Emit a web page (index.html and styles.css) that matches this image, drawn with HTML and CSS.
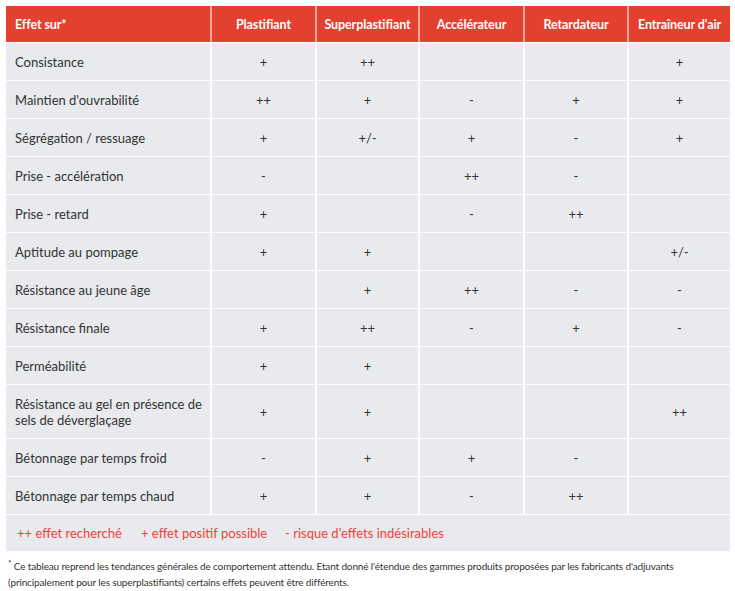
FILE: index.html
```html
<!DOCTYPE html>
<html lang="fr">
<head>
<meta charset="utf-8">
<title>Effets des adjuvants</title>
<link rel="stylesheet" href="styles.css">
</head>
<body>
<div class="wrap">
<table class="tbl">
  <colgroup>
    <col class="c1"><col class="c2"><col class="c3"><col class="c4"><col class="c5"><col class="c6">
  </colgroup>
  <thead>
    <tr>
      <th class="first">Effet sur*</th>
      <th>Plastifiant</th>
      <th>Superplastifiant</th>
      <th>Accélérateur</th>
      <th>Retardateur</th>
      <th>Entraîneur d'air</th>
    </tr>
  </thead>
  <tbody>
    <tr><td class="first">Consistance</td><td>+</td><td>++</td><td></td><td></td><td>+</td></tr>
    <tr><td class="first">Maintien d'ouvrabilité</td><td>++</td><td>+</td><td>-</td><td>+</td><td>+</td></tr>
    <tr><td class="first">Ségrégation / ressuage</td><td>+</td><td>+/-</td><td>+</td><td>-</td><td>+</td></tr>
    <tr><td class="first">Prise - accélération</td><td>-</td><td></td><td>++</td><td>-</td><td></td></tr>
    <tr><td class="first">Prise - retard</td><td>+</td><td></td><td>-</td><td>++</td><td></td></tr>
    <tr><td class="first">Aptitude au pompage</td><td>+</td><td>+</td><td></td><td></td><td>+/-</td></tr>
    <tr><td class="first">Résistance au jeune âge</td><td></td><td>+</td><td>++</td><td>-</td><td>-</td></tr>
    <tr><td class="first">Résistance finale</td><td>+</td><td>++</td><td>-</td><td>+</td><td>-</td></tr>
    <tr><td class="first">Perméabilité</td><td>+</td><td>+</td><td></td><td></td><td></td></tr>
    <tr class="tall"><td class="first">Résistance au gel en présence de<br>sels de déverglaçage</td><td>+</td><td>+</td><td></td><td></td><td>++</td></tr>
    <tr><td class="first">Bétonnage par temps froid</td><td>-</td><td>+</td><td>+</td><td>-</td><td></td></tr>
    <tr><td class="first">Bétonnage par temps chaud</td><td>+</td><td>+</td><td>-</td><td>++</td><td></td></tr>
    <tr class="legend">
      <td colspan="6"><span class="lg lg1">++ effet recherché</span><span class="lg lg2">+ effet positif possible</span><span class="lg">- risque d'effets indésirables</span></td>
    </tr>
  </tbody>
</table>
<p class="note"><sup>*</sup> Ce tableau reprend les tendances générales de comportement attendu. Etant donné l'étendue des gammes produits proposées par les fabricants d'adjuvants<br>(principalement pour les superplastifiants) certains effets peuvent être différents.</p>
</div>
</body>
</html>
```
FILE: styles.css
```css
html, body {
  margin: 0;
  padding: 0;
  background: #ffffff;
}
body {
  font-family: Lato, "Open Sans", sans-serif;
  color: #333333;
}
.wrap {
  padding: 6px 5px 0 6px;
}
.tbl {
  width: 724px;
  border-collapse: separate;
  border-spacing: 0;
  table-layout: fixed;
}
.c1 { width: 204px; }
.c2 { width: 105px; }
.c3 { width: 103px; }
.c4 { width: 105px; }
.c5 { width: 104px; }
.c6 { width: 103px; }
.tbl th {
  background: #e3402f;
  color: #ffffff;
  font-weight: 700;
  font-size: 12.5px;
  height: 36px;
  padding: 0;
  text-align: center;
  border-left: 2px solid #f0a49a;
  letter-spacing: -0.1px;
}
.tbl th.first {
  text-align: left;
  padding-left: 9px;
  border-left: none;
}
.tbl td {
  background: #e8eaed;
  font-size: 13px;
  height: 37px;
  padding: 0;
  text-align: center;
  border-left: 2px solid #ffffff;
  border-top: 1px solid #ffffff;
  line-height: 16px;
}
.tbl td.first {
  text-align: left;
  padding-left: 9px;
  border-left: none;
}
.tbl tr.tall td {
  height: 53px;
}
.tbl tr.legend td {
  text-align: left;
  padding-left: 11px;
  border-left: none;
  color: #e8453a;
  font-size: 13px;
  height: 36px;
}
.lg { display: inline-block; }
.lg1 { width: 124px; }
.lg2 { width: 144px; }
.note {
  margin: 7px 0 0 2px;
  font-size: 10px;
  letter-spacing: -0.14px;
  line-height: 16px;
  color: #333333;
}
.note sup {
  font-size: 8px;
  vertical-align: top;
  line-height: 10px;
}
```
